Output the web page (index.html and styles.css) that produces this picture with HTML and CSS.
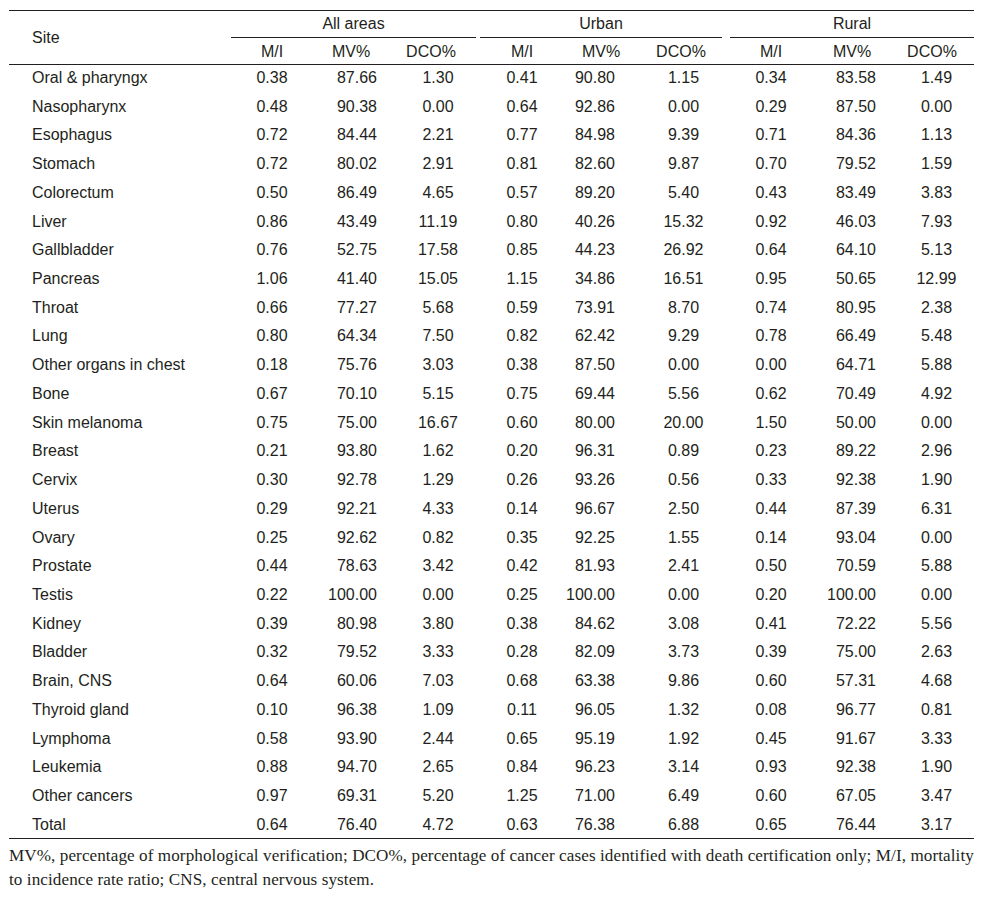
FILE: index.html
```html
<!DOCTYPE html>
<html>
<head>
<meta charset="utf-8">
<link rel="stylesheet" href="styles.css">
</head>
<body>
<div class="tbl">
  <div class="thead">
    <div class="site-h">Site</div>
    <div class="grp g-all"><span>All areas</span></div>
    <div class="grp g-urb"><span>Urban</span></div>
    <div class="grp g-rur"><span>Rural</span></div>
    <div class="sh">M/I</div><div class="sh mv1">MV%</div><div class="sh dco1">DCO%</div>
    <div class="sh">M/I</div><div class="sh mv2">MV%</div><div class="sh dco2">DCO%</div>
    <div class="sh">M/I</div><div class="sh mv3">MV%</div><div class="sh dco3">DCO%</div>
  </div>
  <div class="tbody" id="tbody"></div>
</div>
<p class="note">MV%, percentage of morphological verification; DCO%, percentage of cancer cases identified with death certification only; M/I, mortality to incidence rate ratio; CNS, central nervous system.</p>
<script src="app.js"></script>
</body>
</html>
```
FILE: app.js
```js
const data = [
["Oral & pharyngx","0.38","87.66","1.30","0.41","90.80","1.15","0.34","83.58","1.49"],
["Nasopharynx","0.48","90.38","0.00","0.64","92.86","0.00","0.29","87.50","0.00"],
["Esophagus","0.72","84.44","2.21","0.77","84.98","9.39","0.71","84.36","1.13"],
["Stomach","0.72","80.02","2.91","0.81","82.60","9.87","0.70","79.52","1.59"],
["Colorectum","0.50","86.49","4.65","0.57","89.20","5.40","0.43","83.49","3.83"],
["Liver","0.86","43.49","11.19","0.80","40.26","15.32","0.92","46.03","7.93"],
["Gallbladder","0.76","52.75","17.58","0.85","44.23","26.92","0.64","64.10","5.13"],
["Pancreas","1.06","41.40","15.05","1.15","34.86","16.51","0.95","50.65","12.99"],
["Throat","0.66","77.27","5.68","0.59","73.91","8.70","0.74","80.95","2.38"],
["Lung","0.80","64.34","7.50","0.82","62.42","9.29","0.78","66.49","5.48"],
["Other organs in chest","0.18","75.76","3.03","0.38","87.50","0.00","0.00","64.71","5.88"],
["Bone","0.67","70.10","5.15","0.75","69.44","5.56","0.62","70.49","4.92"],
["Skin melanoma","0.75","75.00","16.67","0.60","80.00","20.00","1.50","50.00","0.00"],
["Breast","0.21","93.80","1.62","0.20","96.31","0.89","0.23","89.22","2.96"],
["Cervix","0.30","92.78","1.29","0.26","93.26","0.56","0.33","92.38","1.90"],
["Uterus","0.29","92.21","4.33","0.14","96.67","2.50","0.44","87.39","6.31"],
["Ovary","0.25","92.62","0.82","0.35","92.25","1.55","0.14","93.04","0.00"],
["Prostate","0.44","78.63","3.42","0.42","81.93","2.41","0.50","70.59","5.88"],
["Testis","0.22","100.00","0.00","0.25","100.00","0.00","0.20","100.00","0.00"],
["Kidney","0.39","80.98","3.80","0.38","84.62","3.08","0.41","72.22","5.56"],
["Bladder","0.32","79.52","3.33","0.28","82.09","3.73","0.39","75.00","2.63"],
["Brain, CNS","0.64","60.06","7.03","0.68","63.38","9.86","0.60","57.31","4.68"],
["Thyroid gland","0.10","96.38","1.09","0.11","96.05","1.32","0.08","96.77","0.81"],
["Lymphoma","0.58","93.90","2.44","0.65","95.19","1.92","0.45","91.67","3.33"],
["Leukemia","0.88","94.70","2.65","0.84","96.23","3.14","0.93","92.38","1.90"],
["Other cancers","0.97","69.31","5.20","1.25","71.00","6.49","0.60","67.05","3.47"],
["Total","0.64","76.40","4.72","0.63","76.38","6.88","0.65","76.44","3.17"]
];
const cls = ["site","mi","mv mv1","dco dco1","mi","mv mv2","dco dco2","mi","mv mv3","dco dco3"];
const body = document.getElementById("tbody");
data.forEach((r, i) => {
  const row = document.createElement("div");
  row.className = "row" + (i === data.length - 1 ? " last" : "");
  r.forEach((v, j) => {
    const c = document.createElement("div");
    c.className = "td " + cls[j];
    c.textContent = v;
    row.appendChild(c);
  });
  body.appendChild(row);
});
```
FILE: styles.css
```css
html, body { margin: 0; padding: 0; background: #fff; }
body {
  padding: 10px 0 0 9px;
  color: #231f20;
  font-family: "Liberation Sans", Arial, sans-serif;
  font-size: 16px;
}
.tbl { width: 965px; }
.thead, .row {
  display: grid;
  grid-template-columns: 222px 82px 82px 86px 82px 82px 85px 82px 82px 80px;
}
.thead {
  grid-template-rows: 27px 26px;
  border-top: 1px solid #231f20;
  border-bottom: 1px solid #231f20;
}
.site-h {
  grid-row: 1 / 3;
  grid-column: 1;
  display: flex;
  align-items: center;
  padding-left: 23px;
  padding-top: 1px;
}
.grp { grid-row: 1; display: flex; }
.grp span {
  flex: 1;
  text-align: center;
  line-height: 26px;
  border-bottom: 1px solid #231f20;
}
.g-all { grid-column: 2 / 5; }
.g-all span { margin-right: 5px; }
.g-urb { grid-column: 5 / 8; }
.g-urb span { margin-left: -1px; margin-right: 8px; }
.g-rur { grid-column: 8 / 11; }
.sh {
  grid-row: 2;
  text-align: center;
  padding-top: 2px;
  line-height: 24px;
}
.sh.mv1, .sh.mv2 { padding-right: 6px; }
.sh.mv3 { padding-right: 2px; }
.sh.dco1 { padding-right: 14px; }
.sh.dco2 { padding-right: 13px; }
.sh.dco3 { padding-right: 4px; }

.row { height: 28.73px; }
.row.last { height: 26px; border-bottom: 1px solid #231f20; }
.td { line-height: 25px; white-space: nowrap; }
.td.site { padding-left: 23px; }
.td.mi { text-align: center; }
.td.mv { text-align: right; }
.td.mv1 { padding-right: 18px; }
.td.mv2 { padding-right: 30px; }
.td.mv3 { padding-right: 18px; }
.td.dco { text-align: center; }
.td.dco2 { padding-right: 8px; }
.td.dco3 { padding-left: 5px; }

.note {
  margin: 5px 0 0 0;
  width: 975px;
  font-family: "Liberation Serif", "Times New Roman", serif;
  font-size: 17.1px;
  letter-spacing: 0.09px;
  line-height: 24px;
}
```
